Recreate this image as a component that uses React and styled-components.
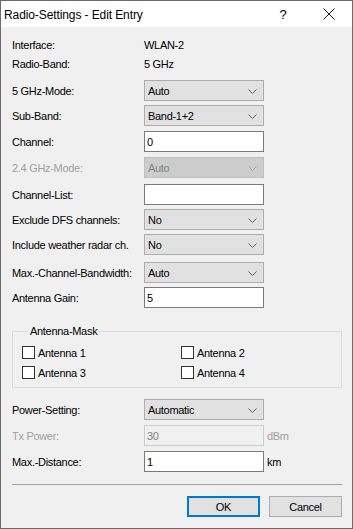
import React from 'react'
import styled, { createGlobalStyle } from 'styled-components'

const GlobalStyle = createGlobalStyle`
    html, body {
        margin: 0;
        padding: 0;
        background: #f0f0f0;
    }
    * {
        box-sizing: border-box;
    }
`

const rows = [
    { label: 'Exclude DFS channels:', kind: 'combo', value: 'No', mt: 4 },
    { label: 'Include weather radar ch.', kind: 'combo', value: 'No', mt: 4 },
    { label: 'Max.-Channel-Bandwidth:', kind: 'combo', value: 'Auto', mt: 7 },
    { label: 'Antenna Gain:', kind: 'input', value: '5', mt: 4 },
]

function Chevron({ disabled }) {
    return (
        <svg width="9" height="5" viewBox="0 0 9 5">
            <path d="M0.5 0.5 L4.5 4.5 L8.5 0.5" fill="none" stroke={disabled ? '#a8a8a8' : '#606060'} strokeWidth="1" />
        </svg>
    )
}

function Combo({ value, disabled }) {
    return (
        <StyledCombo $disabled={disabled}>
            <span>{value}</span>
            <Chevron disabled={disabled} />
        </StyledCombo>
    )
}

function Field({ label, kind, value, disabled, unit, mt }) {
    return (
        <Row $mt={mt}>
            <Label $disabled={disabled}>{label}</Label>
            {kind === 'combo'
                ? <Combo value={value} disabled={disabled} />
                : <Input $disabled={disabled}>{value}</Input>}
            {unit && <Unit $disabled={disabled}>{unit}</Unit>}
        </Row>
    )
}

function Check({ label }) {
    return (
        <CheckItem>
            <Box />
            <span>{label}</span>
        </CheckItem>
    )
}

function App() {
    return (
        <>
            <GlobalStyle />
            <Window>
                <TitleBar>
                    <Title>Radio-Settings - Edit Entry</Title>
                    <Help>?</Help>
                    <Close>
                        <svg width="12" height="12" viewBox="0 0 12 12">
                            <path d="M0.5 0.5 L11.5 11.5 M11.5 0.5 L0.5 11.5" stroke="#1a1a1a" strokeWidth="1" />
                        </svg>
                    </Close>
                </TitleBar>
                <Body>
                    <InfoRow $mt={8}>
                        <Label>Interface:</Label>
                        <Value>WLAN-2</Value>
                    </InfoRow>
                    <InfoRow $mt={0}>
                        <Label>Radio-Band:</Label>
                        <Value>5 GHz</Value>
                    </InfoRow>
                    <Field label="5 GHz-Mode:" kind="combo" value="Auto" mt={7} />
                    <Field label="Sub-Band:" kind="combo" value="Band-1+2" mt={4} />
                    <Field label="Channel:" kind="input" value="0" mt={5} />
                    <Field label="2.4 GHz-Mode:" kind="combo" value="Auto" disabled mt={5} />
                    <Field label="Channel-List:" kind="input" value="" mt={6} />
                    {rows.map((r, i) => (
                        <Field key={i} {...r} />
                    ))}
                    <Group>
                        <Legend>Antenna-Mask</Legend>
                        <CheckGrid>
                            <Check label="Antenna 1" />
                            <Check label="Antenna 2" />
                            <Check label="Antenna 3" />
                            <Check label="Antenna 4" />
                        </CheckGrid>
                    </Group>
                    <Field label="Power-Setting:" kind="combo" value="Automatic" mt={11} />
                    <Field label="Tx Power:" kind="input" value="30" unit="dBm" disabled mt={5} />
                    <Field label="Max.-Distance:" kind="input" value="1" unit="km" mt={5} />
                    <Separator />
                    <Buttons>
                        <Button $default>OK</Button>
                        <Button>Cancel</Button>
                    </Buttons>
                </Body>
            </Window>
        </>
    )
}

export default App

const Window = styled.div`
    width: 353px;
    height: 529px;
    border: 1px solid #6b6b6b;
    background: #f0f0f0;
    font-family: "Liberation Sans", Arial, sans-serif;
    font-size: 11px;
    letter-spacing: -0.3px;
    color: #000;
    overflow: hidden;
`

const TitleBar = styled.div`
    height: 26px;
    background: #fff;
    display: flex;
    align-items: center;
    padding-left: 3px;
`

const Title = styled.div`
    font-size: 12px;
    letter-spacing: -0.1px;
    flex: 1;
    padding-top: 1px;
`

const Help = styled.div`
    font-size: 13px;
    width: 46px;
    text-align: center;
`

const Close = styled.div`
    width: 46px;
    height: 26px;
    display: flex;
    align-items: center;
    justify-content: center;
`

const Body = styled.div`
    padding: 0 10px 0 11px;
    display: flex;
    flex-direction: column;
`

const InfoRow = styled.div`
    height: 19px;
    display: flex;
    align-items: center;
    margin-top: ${p => p.$mt}px;
`

const Row = styled.div`
    height: 21px;
    display: flex;
    align-items: center;
    margin-top: ${p => p.$mt}px;
`

const Label = styled.div`
    width: 132px;
    flex-shrink: 0;
    white-space: nowrap;
    color: ${p => p.$disabled ? '#a0a0a0' : '#000'};
`

const Value = styled.div``

const StyledCombo = styled.div`
    width: 120px;
    height: 21px;
    background: ${p => p.$disabled ? '#cccccc' : '#e1e1e1'};
    border: 1px solid ${p => p.$disabled ? '#bfbfbf' : '#adadad'};
    color: ${p => p.$disabled ? '#838383' : '#000'};
    display: flex;
    align-items: center;
    justify-content: space-between;
    padding: 1px 6px 0 3px;
`

const Input = styled.div`
    width: 120px;
    height: 21px;
    background: ${p => p.$disabled ? '#f0f0f0' : '#fff'};
    border: 1px solid ${p => p.$disabled ? '#cccccc' : '#7a7a7a'};
    color: ${p => p.$disabled ? '#838383' : '#000'};
    display: flex;
    align-items: center;
    padding: 1px 2px 0;
`

const Unit = styled.div`
    margin-left: 3px;
    color: ${p => p.$disabled ? '#a0a0a0' : '#000'};
`

const Group = styled.fieldset`
    margin: 17px 0 0 0;
    padding: 4px 0 8px 9px;
    border: 1px solid #dcdcdc;
    min-width: 0;
`

const Legend = styled.legend`
    padding: 0 2px;
    margin-left: 6px;
    line-height: 13px;
`

const CheckGrid = styled.div`
    display: grid;
    grid-template-columns: 159px 1fr;
    row-gap: 7px;
    padding-top: 4px;
`

const CheckItem = styled.div`
    display: flex;
    align-items: center;
    height: 13px;
    gap: 3px;
`

const Box = styled.span`
    width: 13px;
    height: 13px;
    border: 1px solid #333;
    background: #fff;
    flex-shrink: 0;
`

const Separator = styled.div`
    height: 1px;
    background: #a0a0a0;
    margin-top: 12px;
`

const Buttons = styled.div`
    display: flex;
    justify-content: flex-end;
    gap: 9px;
    margin-top: 11px;
`

const Button = styled.div`
    width: 73px;
    height: 21px;
    background: #e1e1e1;
    border: ${p => p.$default ? '2px solid #0078d7' : '1px solid #adadad'};
    display: flex;
    align-items: center;
    justify-content: center;
    padding-top: 1px;
`
